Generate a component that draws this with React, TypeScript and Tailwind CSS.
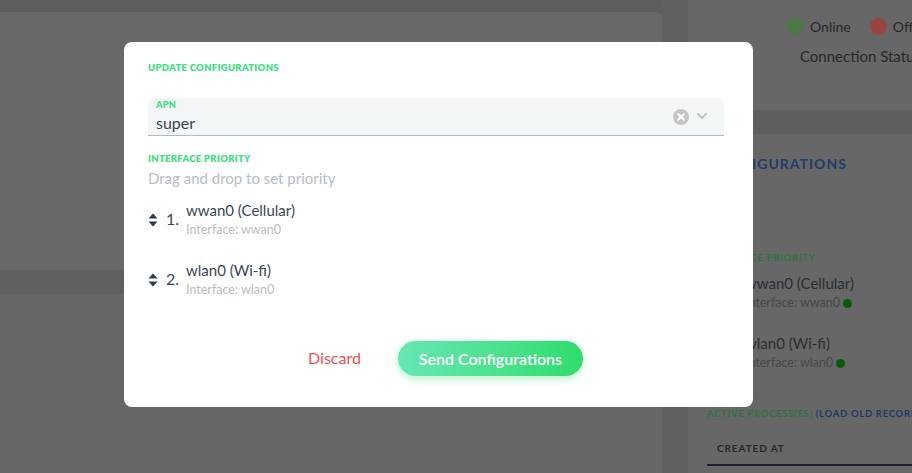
import React from "react";

const font = { fontFamily: "Lato, 'Noto Sans', sans-serif" };

function SortIcon({ color }: { color: string }) {
  return (
    <svg width="10" height="14" viewBox="0 0 10 14" className="shrink-0">
      <path d="M5 0.5 L9.5 5.5 H0.5 Z" fill={color} />
      <path d="M5 13.5 L9.5 8.5 H0.5 Z" fill={color} />
    </svg>
  );
}

function Item({
  n,
  name,
  iface,
  dim,
}: {
  n: string;
  name: string;
  iface: string;
  dim?: boolean;
}) {
  return (
    <div className="flex items-center whitespace-nowrap">
      <SortIcon color={dim ? "#24282f" : "#2f3b4c"} />
      <span className={`ml-[8px] w-[20px] shrink-0 text-[16px] leading-[20px] mt-[-2px] ${dim ? "text-[#2a2e35]" : "text-[#3b4656]"}`}>{n}</span>
      <div className="flex flex-col">
        <span className={`text-[15px] leading-[20px] ${dim ? "text-[#2a2e35]" : "text-[#3b4656]"}`}>{name}</span>
        {dim ? (
          <span className="flex items-center text-[12.5px] leading-[18px] text-[#45484c] mt-[1px]">
            {iface}
            <span className="ml-[3px] shrink-0 w-[9px] h-[9px] rounded-full bg-[#075c07]" />
          </span>
        ) : (
          <span className="text-[12.5px] leading-[18px] text-[#b9bec4] mt-[1px]">{iface}</span>
        )}
      </div>
    </div>
  );
}

export default function App() {
  return (
    <div className="relative w-[912px] h-[473px] overflow-hidden bg-[#5e5e5e] flex" style={font}>
      {/* left page */}
      <div className="w-[662px] shrink-0 flex flex-col pt-[12px]">
        <div className="h-[258px] bg-[#686868] rounded-tr-[6px]" />
        <div className="h-[24px] bg-[#606060]" />
        <div className="flex-1 bg-[#666666]" />
      </div>
      <div className="w-[26px] shrink-0 bg-[#606060]" />
      {/* right panel */}
      <div className="w-[224px] shrink-0 overflow-hidden bg-[#676767] flex flex-col">
        <div className="h-[110px] shrink-0 flex flex-col pt-[16px]">
          <div className="flex items-center whitespace-nowrap pl-[99px]">
            <span className="shrink-0 w-[17px] h-[17px] rounded-full bg-[#4b7a46]" />
            <span className="ml-[6px] text-[14px] text-[#26282d]">Online</span>
            <span className="ml-[19px] shrink-0 w-[17px] h-[17px] rounded-full bg-[#9a4442]" />
            <span className="ml-[6px] text-[14px] text-[#26282d]">Offline</span>
          </div>
          <div className="mt-[8px] pl-[112px] text-[15px] text-[#26282d] whitespace-nowrap">Connection Status</div>
        </div>
        <div className="h-[24px] shrink-0 bg-[#5f5f5f]" />
        <div className="flex flex-col pl-[19px] whitespace-nowrap">
          <div className="mt-[19px] text-[14px] font-bold tracking-[1px] text-[#1e3d6a] pl-[2px]">CONFIGURATIONS</div>
          <div className="mt-[77px] text-[9.5px] font-bold tracking-[0.7px] text-[#2e7440]">INTERFACE PRIORITY</div>
          <div className="mt-[8px] flex flex-col gap-[21px]">
            <Item n="1." name="wwan0 (Cellular)" iface="Interface: wwan0" dim />
            <Item n="2." name="wlan0 (Wi-fi)" iface="Interface: wlan0" dim />
          </div>
          <div className="mt-[35px] text-[9.5px] font-bold tracking-[0.7px]">
            <span className="text-[#2e7440]">ACTIVE PROCESS(ES)</span>{" "}
            <span className="text-[#1e3a68]">(LOAD OLD RECORDS)</span>
          </div>
          <div className="mt-[19px] pl-[10px] text-[10px] font-bold tracking-[0.9px] text-[#25262c]">CREATED AT</div>
          <div className="mt-[8px] h-[2px] bg-[#1d2330]" />
        </div>
      </div>

      {/* modal */}
      <div className="absolute left-[124px] top-[42px] w-[629px] h-[365px] bg-white rounded-[8px] flex flex-col px-[24px] pt-[20px]">
        <div className="text-[9.5px] font-extrabold tracking-[0.3px] text-[#3fe07f] leading-[12px]">UPDATE CONFIGURATIONS</div>
        <div className="mt-[24px] w-[576px] h-[38px] bg-[#f3f6f7] rounded-t-[6px] border-b border-[#b4b9bd] flex items-center pl-[8px] pr-[16px]">
          <div className="flex-1 flex flex-col">
            <span className="text-[9px] font-extrabold tracking-[0.3px] text-[#3fe07f] leading-[11px] mt-[-1px]">APN</span>
            <span className="text-[16px] text-[#3a4352] leading-[20px] mt-[3px]">super</span>
          </div>
          <svg width="16" height="16" viewBox="0 0 16 16">
            <circle cx="8" cy="8" r="8" fill="#c3c5c7" />
            <path d="M5.2 5.2 L10.8 10.8 M10.8 5.2 L5.2 10.8" stroke="#fff" strokeWidth="2.2" strokeLinecap="round" />
          </svg>
          <svg width="12" height="8" viewBox="0 0 12 8" className="ml-[7px] mt-[-1px]">
            <path d="M2 2 L6 6 L10 2" stroke="#c3c5c7" strokeWidth="2.2" fill="none" strokeLinecap="round" strokeLinejoin="round" />
          </svg>
        </div>
        <div className="mt-[17px] text-[9.5px] font-extrabold tracking-[0.3px] text-[#3fe07f] leading-[12px]">INTERFACE PRIORITY</div>
        <div className="mt-[3px] text-[15px] text-[#b8bec4] leading-[20px]">Drag and drop to set priority</div>
        <div className="mt-[12px] flex flex-col gap-[21px]">
          <Item n="1." name="wwan0 (Cellular)" iface="Interface: wwan0" />
          <Item n="2." name="wlan0 (Wi-fi)" iface="Interface: wlan0" />
        </div>
        <div className="mt-[42px] flex items-center justify-center gap-[37px] pl-[14px]">
          <span className="text-[16px] text-[#ec5050] mt-[-2px]">Discard</span>
          <button className="w-[185px] h-[35px] rounded-full text-white text-[16px] font-semibold bg-gradient-to-r from-[#66e6b3] to-[#2ddd6b] shadow-[0_3px_8px_rgba(46,221,107,0.35)]">
            Send Configurations
          </button>
        </div>
      </div>
    </div>
  );
}
